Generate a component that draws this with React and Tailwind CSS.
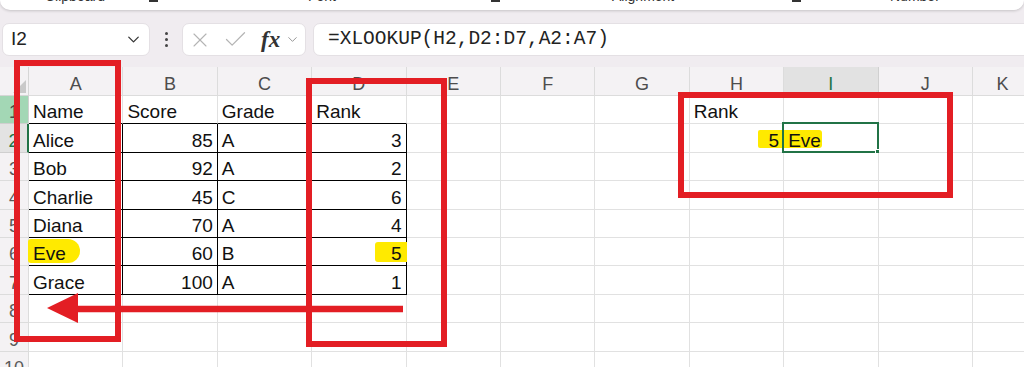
import React from 'react';
import { ChevronDown, X, Check } from 'lucide-react';

const COLS = ['A', 'B', 'C', 'D', 'E', 'F', 'G', 'H', 'I', 'J', 'K'];

// table values, keyed by column letter
const ROWS = [
  { A: 'Name', B: 'Score', C: 'Grade', D: 'Rank', H: 'Rank' },
  { A: 'Alice', B: '85', C: 'A', D: '3', H: '5', I: 'Eve' },
  { A: 'Bob', B: '92', C: 'A', D: '2' },
  { A: 'Charlie', B: '45', C: 'C', D: '6' },
  { A: 'Diana', B: '70', C: 'A', D: '4' },
  { A: 'Eve', B: '60', C: 'B', D: '5' },
  { A: 'Grace', B: '100', C: 'A', D: '1' },
  {},
  {},
  {},
];

const inTable = (col) => ['A', 'B', 'C', 'D'].includes(col);
const isNumber = (v) => v !== undefined && /^\d+$/.test(v);

const Highlight = ({ className }) => (
  <div className={`absolute bg-[#ffea00] ${className}`} />
);

const Cell = ({ col, rowIdx, value }) => {
  const r = rowIdx + 1;
  const right = inTable(col) && r >= 2 && r <= 7 ? 'border-r-black' : 'border-r-[#e1e1e1]';
  const bottom = inTable(col) && r >= 1 && r <= 7 ? 'border-b-black' : 'border-b-[#e1e1e1]';
  const numeric = isNumber(value) && r >= 2;

  return (
    <div
      className={`relative flex items-end h-[28.4px] bg-white border-r border-b ${right} ${bottom} ${
        numeric ? 'justify-end pr-[4px]' : 'pl-[4px]'
      }`}
    >
      {col === 'A' && r === 6 && <Highlight className="-left-[1px] top-[1px] w-[52px] h-[24px] rounded-r-[12px] rounded-l-[3px]" />}
      {col === 'D' && r === 6 && <Highlight className="left-[63px] top-[4px] w-[32px] h-[20px] rounded-l-[3px]" />}
      {col === 'H' && r === 2 && <Highlight className="left-[68px] top-[6px] w-[25px] h-[18px] rounded-l-[2px]" />}
      {col === 'I' && r === 2 && <Highlight className="-left-[2px] top-[6px] w-[40px] h-[18px] rounded-r-[3px]" />}
      <span className="relative pb-px text-[19px] leading-[21px] text-[#111]">{value}</span>
      {col === 'I' && r === 2 && (
        <div className="absolute -left-[2px] -top-[2px] -right-[1px] -bottom-[1px] border-2 border-[#217346]">
          <div className="absolute -right-[4px] -bottom-[4px] w-[6px] h-[6px] bg-[#217346] border border-white" />
        </div>
      )}
    </div>
  );
};

const RowHeader = ({ n }) => {
  if (n === 1)
    return (
      <div className="flex items-end justify-center h-[28.4px] bg-[#a3d7b5] border-r border-b border-[#cfcfcf] text-[18px] leading-[21px] text-[#4a4a4a]">
        1
      </div>
    );
  if (n === 2)
    return (
      <div className="flex items-end justify-center h-[28.4px] bg-[#e3e3e3] border-r-2 border-r-[#217346] border-b border-b-[#cfcfcf] text-[18px] leading-[21px] text-[#217346]">
        2
      </div>
    );
  return (
    <div className="flex items-end justify-center h-[28.4px] bg-[#f4f2f4] border-r border-b border-[#dcdcdc] text-[18px] leading-[21px] text-[#5a5a5a]">
      {n}
    </div>
  );
};

export default function App() {
  return (
    <div className="relative w-[1024px] h-[367px] overflow-hidden bg-[#f0ecf0] font-['Liberation_Sans',Arial,sans-serif]">
      {/* ribbon bottom edge */}
      <div className="h-[10px] bg-white rounded-b-[10px] shadow-[0_1px_3px_rgba(0,0,0,0.18)] overflow-hidden flex items-start text-[14px] leading-[16px] text-[#333]">
        <span className="-mt-[12px] ml-[45px] w-[62px] shrink-0">Clipboard</span>
        <span className="-mt-[7px] ml-[42px] w-[9px] h-[9px] shrink-0 bg-[#333]" />
        <span className="-mt-[12px] ml-[150px] w-[30px] shrink-0">Font</span>
        <span className="-mt-[7px] ml-[153px] w-[9px] h-[9px] shrink-0 bg-[#333]" />
        <span className="-mt-[12px] ml-[112px] w-[66px] shrink-0">Alignment</span>
        <span className="-mt-[7px] ml-[114px] w-[9px] h-[9px] shrink-0 bg-[#333]" />
        <span className="-mt-[12px] ml-[89px] shrink-0">Number</span>
      </div>

      {/* formula bar */}
      <div className="mt-[13px] flex h-[33px] items-stretch">
        <div className="ml-[2px] w-[148px] flex items-center justify-between bg-white rounded-[7px] border border-[#e4e0e4] pl-[8px] pr-[6px]">
          <span className="text-[19px] text-[#222]">I2</span>
          <ChevronDown size={19} strokeWidth={1.6} className="text-[#333]" />
        </div>
        <div className="w-[32px] flex flex-col items-center justify-center gap-[3px]">
          <span className="w-[3px] h-[3px] rounded-full bg-[#444]" />
          <span className="w-[3px] h-[3px] rounded-full bg-[#444]" />
          <span className="w-[3px] h-[3px] rounded-full bg-[#444]" />
        </div>
        <div className="w-[124px] flex items-center bg-white rounded-[7px] border border-[#e4e0e4] pl-[5px]">
          <X size={24} strokeWidth={1.1} className="text-[#b4b4b4]" />
          <Check size={27} strokeWidth={1.1} className="ml-[10px] text-[#b4b4b4]" />
          <span className="ml-[12px] font-['Liberation_Serif',serif] italic font-bold text-[23px] leading-none text-[#333]">fx</span>
          <ChevronDown size={15} strokeWidth={1.4} className="ml-[5px] text-[#888]" />
        </div>
        <div className="ml-[7px] flex-1 -mr-[10px] flex items-center bg-white rounded-[7px] border border-[#e4e0e4] pl-[14px]">
          <span className="font-['Liberation_Mono',monospace] text-[19.5px] text-[#222]">=XLOOKUP(H2,D2:D7,A2:A7)</span>
        </div>
      </div>

      {/* sheet grid */}
      <div className="mt-[11px] grid grid-cols-[29px_repeat(10,94.4px)_60px]">
        {/* corner */}
        <div className="relative h-[29px] bg-[#f4f2f4] border-r border-b border-[#d6d6d6]">
          <svg className="absolute right-[2px] bottom-[2px]" width="13" height="13" viewBox="0 0 13 13">
            <polygon points="13,0 13,13 0,13" fill="#c9c9c9" />
          </svg>
        </div>
        {COLS.map((c) => (
          <div
            key={c}
            className={`flex items-end justify-center h-[29px] border-r border-b text-[18px] leading-[21px] ${
              c === 'I' ? 'bg-[#e2e2e2] border-[#d0d0d0] text-[#217346]' : 'bg-[#f4f2f4] border-[#dcdcdc] text-[#4d4d4d]'
            }`}
          >
            {c}
          </div>
        ))}

        {ROWS.map((row, i) => (
          <React.Fragment key={i}>
            <RowHeader n={i + 1} />
            {COLS.map((c) => (
              <Cell key={c} col={c} rowIdx={i} value={row[c]} />
            ))}
          </React.Fragment>
        ))}
      </div>

      {/* red annotations */}
      <div className="absolute left-[14px] top-[60px] w-[107px] h-[282px] border-[6px] border-[#e31e24]" />
      <div className="absolute left-[306px] top-[78px] w-[141px] h-[269px] border-[6px] border-[#e31e24]" />
      <div className="absolute left-[678px] top-[92px] w-[275px] h-[106px] border-[6px] border-[#e31e24]" />
      <svg className="absolute left-0 top-0" width="1024" height="367">
        <line x1="74" y1="309" x2="403" y2="309" stroke="#e31e24" strokeWidth="6.5" />
        <polygon points="47,308 78,293 78,323" fill="#e31e24" />
      </svg>
    </div>
  );
}
